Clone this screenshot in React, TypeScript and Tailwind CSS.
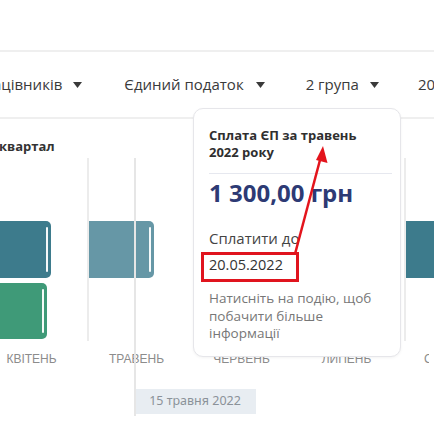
import React from "react";

const Caret = ({ ml }: { ml: string }) => (
  <svg width="9" height="6" viewBox="0 0 9 6" className={`${ml} shrink-0`}>
    <path d="M0 0 L9 0 L4.5 6 Z" fill="#3a3a3a" />
  </svg>
);

const Bar = ({ left, top, width, height, color, line }: { left: number; top: number; width: number; height: number; color: string; line: boolean }) => (
  <div
    className="absolute rounded-r-[5px]"
    style={{ left, top, width, height, backgroundColor: color }}
  >
    {line && (
      <div className="absolute right-[3px] top-[6px] bottom-[6px] w-[2px] rounded-full bg-white/95" />
    )}
  </div>
);

export default function App() {
  return (
    <div
      className="relative w-[434px] h-[435px] overflow-hidden bg-white"
      style={{ fontFamily: '"Open Sans", "Noto Sans", sans-serif' }}
    >
      <div className="h-[52px] border-b-2 border-[#efefef]" />
      <div className="h-[67px] flex items-center border-b-2 border-[#efefef] text-[15px] text-[#3a3a3a] whitespace-nowrap">
        <div className="flex items-center ml-[-7px] shrink-0">
          <span>ацівників</span>
          <Caret ml="ml-[11px]" />
        </div>
        <div className="flex items-center ml-[42px] shrink-0">
          <span>Єдиний податок</span>
          <Caret ml="ml-[12px]" />
        </div>
        <div className="flex items-center ml-[41px] shrink-0">
          <span>2 група</span>
          <Caret ml="ml-[11px]" />
        </div>
        <div className="flex items-center ml-[39px] shrink-0">
          <span>20</span>
        </div>
      </div>

      <div className="relative flex flex-col">
        <div className="pt-[19px] leading-[17px] text-[13px] font-bold text-[#333] ml-[-1px]">квартал</div>
        <div className="relative h-[186px]">
          <Bar left={-10} top={66} width={61} height={57} color="#3d7b8c" line />
          <Bar left={88} top={66} width={66} height={57} color="#6697a6" line />
          <Bar left={-10} top={128} width={57} height={56} color="#3f9a78" line />
          <Bar left={405} top={66} width={40} height={57} color="#3d7b8c" line={false} />
          <div className="absolute left-[87px] top-[3px] bottom-0 w-[2px] bg-[#ececec]" />
          <div className="absolute left-[404px] top-[3px] bottom-0 w-[2px] bg-[#ececec]" />
        </div>
        <div
          className="h-[36px] flex items-center ml-[-21px] text-[12px] text-[#8c8c8c] whitespace-nowrap"
          style={{ fontFamily: '"Liberation Sans", Arial, sans-serif' }}
        >
          <div className="w-[105px] shrink-0 text-center">КВІТЕНЬ</div>
          <div className="w-[105px] shrink-0 text-center">ТРАВЕНЬ</div>
          <div className="w-[105px] shrink-0 text-center">ЧЕРВЕНЬ</div>
          <div className="w-[105px] shrink-0 text-center">ЛИПЕНЬ</div>
          <div className="w-[30px] shrink-0 pl-[25px] overflow-hidden">С</div>
        </div>
        <div className="mt-[12px] ml-[134px] w-[122px] h-[25px] bg-[#e8edf2] flex items-center justify-center text-[12.5px] text-[#8b9299]"
          style={{ fontFamily: '"Noto Sans", sans-serif' }}>
          15 травня 2022
        </div>
        <div className="absolute left-[134px] top-[39px] h-[258px] w-[2px] bg-[#e6e6e6]" />
      </div>

      <div className="absolute left-[193px] top-[108px] w-[208px] h-[249px] rounded-[10px] border border-[#e6e6ea] bg-white shadow-[0_1px_3px_rgba(0,0,0,0.05)] pt-[18px] pl-[15px] pr-[8px]">
        <div className="text-[13px] leading-[17px] font-bold text-[#2f2f2f]">
          Сплата ЄП за травень<br />2022 року
        </div>
        <div className="mt-[12px] h-px bg-[#e6e8ef]" />
        <div className="mt-[4px] text-[24px] leading-[30px] font-bold text-[#2d3a74] whitespace-nowrap">1 300,00 грн</div>
        <div className="mt-[20px] text-[15px] leading-[20px] text-[#444]">Сплатити до</div>
        <div className="mt-[7px] text-[14.5px] leading-[20px] text-[#333]">20.05.2022</div>
        <div className="mt-[15px] text-[13.5px] leading-[17.5px] text-[#777] whitespace-nowrap">
          Натисніть на подію, щоб<br />побачити більше<br />інформації
        </div>
      </div>

      <div className="absolute left-[201px] top-[252px] w-[98px] h-[30px] border-[3px] border-[#e0141e]" />

      <svg className="absolute left-0 top-0 pointer-events-none" width="434" height="435">
        <line x1="295" y1="254" x2="320" y2="160" stroke="#e3141c" strokeWidth="2.5" />
        <path d="M323 146 L327.5 163 L316 160 Z" fill="#e3141c" />
      </svg>
    </div>
  );
}
